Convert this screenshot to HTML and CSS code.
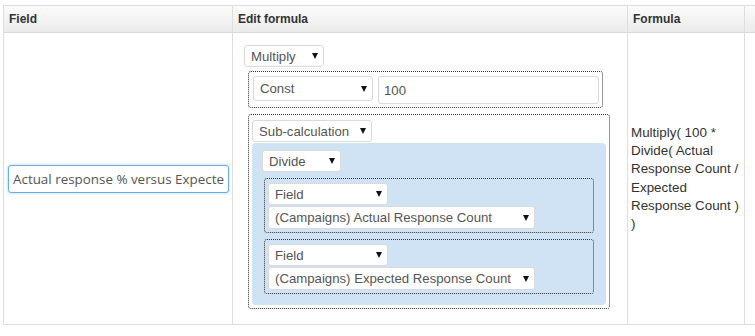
FILE: index.html
```html
<!DOCTYPE html>
<html>
<head>
<meta charset="utf-8">
<link rel="stylesheet" href="styles.css">
</head>
<body>
<div class="grid" role="table">
  <div class="th" role="columnheader">Field</div>
  <div class="th" role="columnheader">Edit formula</div>
  <div class="th" role="columnheader">Formula</div>
  <div class="th" role="columnheader"></div>

  <div class="td cell-field" role="cell">
    <input class="name-input" type="text" value="Actual response % versus Expected Response Count">
  </div>
  <div class="td cell-edit" role="cell">
    <span class="sel w-multiply"><select><option>Multiply</option></select></span>
    <div class="box box-const">
      <span class="sel w-type h-const"><select><option>Const</option></select></span>
      <input class="const-input" type="text" value="100">
    </div>
    <div class="box box-sub">
      <span class="sel w-type"><select><option>Sub-calculation</option></select></span>
      <div class="sub-panel">
        <span class="sel w-divide"><select><option>Divide</option></select></span>
        <div class="box box-field">
          <span class="sel w-type"><select><option>Field</option></select></span>
          <span class="sel w-long"><select><option>(Campaigns) Actual Response Count</option></select></span>
        </div>
        <div class="box box-field">
          <span class="sel w-type"><select><option>Field</option></select></span>
          <span class="sel w-long"><select><option>(Campaigns) Expected Response Count</option></select></span>
        </div>
      </div>
    </div>
  </div>
  <div class="td cell-formula" role="cell">Multiply( 100 * Divide( Actual Response Count / Expected Response Count ) )</div>
  <div class="td" role="cell"></div>
</div>
</body>
</html>
```
FILE: styles.css
```css
html, body {
  margin: 0;
  padding: 0;
  background: #fff;
  overflow: hidden;
}
body {
  padding: 5px 0 0 3px;
  font-family: "Liberation Sans", Arial, sans-serif;
  font-size: 13px;
  color: #333;
}
.grid {
  display: grid;
  grid-template-columns: 229px 395px 117px 39px;
  grid-template-rows: 27px 292px;
  width: 781px;
  border-top: 1px solid #dedede;
  border-left: 1px solid #dedede;
}
.th,
.td {
  box-sizing: border-box;
  border-right: 1px solid #dedede;
  border-bottom: 1px solid #dedede;
}
.th {
  display: flex;
  align-items: center;
  padding: 0 0 1px 5px;
  font-size: 12px;
  font-weight: bold;
  color: #333;
  background: linear-gradient(#fbfbfb, #ebebeb);
  border-bottom-color: #d9d9d9;
  box-shadow: inset 0 -1px 0 #eaeaea;
}
.td {
  display: flex;
  flex-direction: column;
  justify-content: center;
}
.cell-field {
  padding: 0 4px;
}
.name-input {
  display: block;
  box-sizing: border-box;
  width: 221px;
  height: 28px;
  margin: 0;
  padding: 0 4px;
  border: 1px solid #66afe9;
  border-radius: 3px;
  box-shadow: 0 0 3px rgba(102, 175, 233, 0.6);
  font-family: "Open Sans", sans-serif;
  font-size: 13.4px;
  color: #555;
  outline: none;
}
.cell-edit {
  justify-content: flex-start;
  padding: 12px 0 0 11px;
}
.cell-formula {
  padding: 0 3px 0 3px;
  font-size: 13.4px;
  line-height: 18.3px;
  color: #333;
}

/* select look-alike */
.sel {
  position: relative;
  display: block;
  box-sizing: border-box;
  height: 22px;
}
.sel select {
  appearance: none;
  -webkit-appearance: none;
  display: block;
  box-sizing: border-box;
  width: 100%;
  height: 100%;
  margin: 0;
  padding: 0 0 0 6px;
  border: 1px solid #dadada;
  border-radius: 3px;
  background: #fff;
  font-family: "Liberation Sans", Arial, sans-serif;
  font-size: 13.2px;
  color: #555;
}
.sel::after {
  content: "";
  position: absolute;
  right: 6px;
  top: 50%;
  margin-top: -3px;
  border-left: 3px solid transparent;
  border-right: 3px solid transparent;
  border-top: 6px solid #111;
  pointer-events: none;
}
.w-multiply { width: 80px; }
.w-type { width: 120px; }
.w-divide { width: 79px; }
.w-long { width: 267px; height: 23px; margin-top: 1px; }
.h-const { height: 25px; }

.box {
  box-sizing: border-box;
  border: 1px dotted #333;
  border-radius: 3px;
}
.box-const {
  display: flex;
  align-items: flex-start;
  gap: 5px;
  width: 355px;
  margin: 4px 0 0 4px;
  padding: 4px 3px 3px 4px;
}
.const-input {
  box-sizing: border-box;
  width: 221px;
  height: 28px;
  margin: 0;
  padding: 0 5px;
  border: 1px solid #dadada;
  border-radius: 3px;
  font-family: "Liberation Sans", Arial, sans-serif;
  font-size: 13.2px;
  color: #555;
}
.box-sub {
  width: 362px;
  margin: 6px 0 0 4px;
  padding: 5px 3px 3px 3px;
}
.sub-panel {
  margin-top: 1px;
  padding: 7px 12px 11px 10px;
  background: #d0e3f4;
  border-radius: 4px;
}
.box-field {
  width: 330px;
  margin: 6px 0 0 2px;
  padding: 4px 3px 3px 3px;
}
```
